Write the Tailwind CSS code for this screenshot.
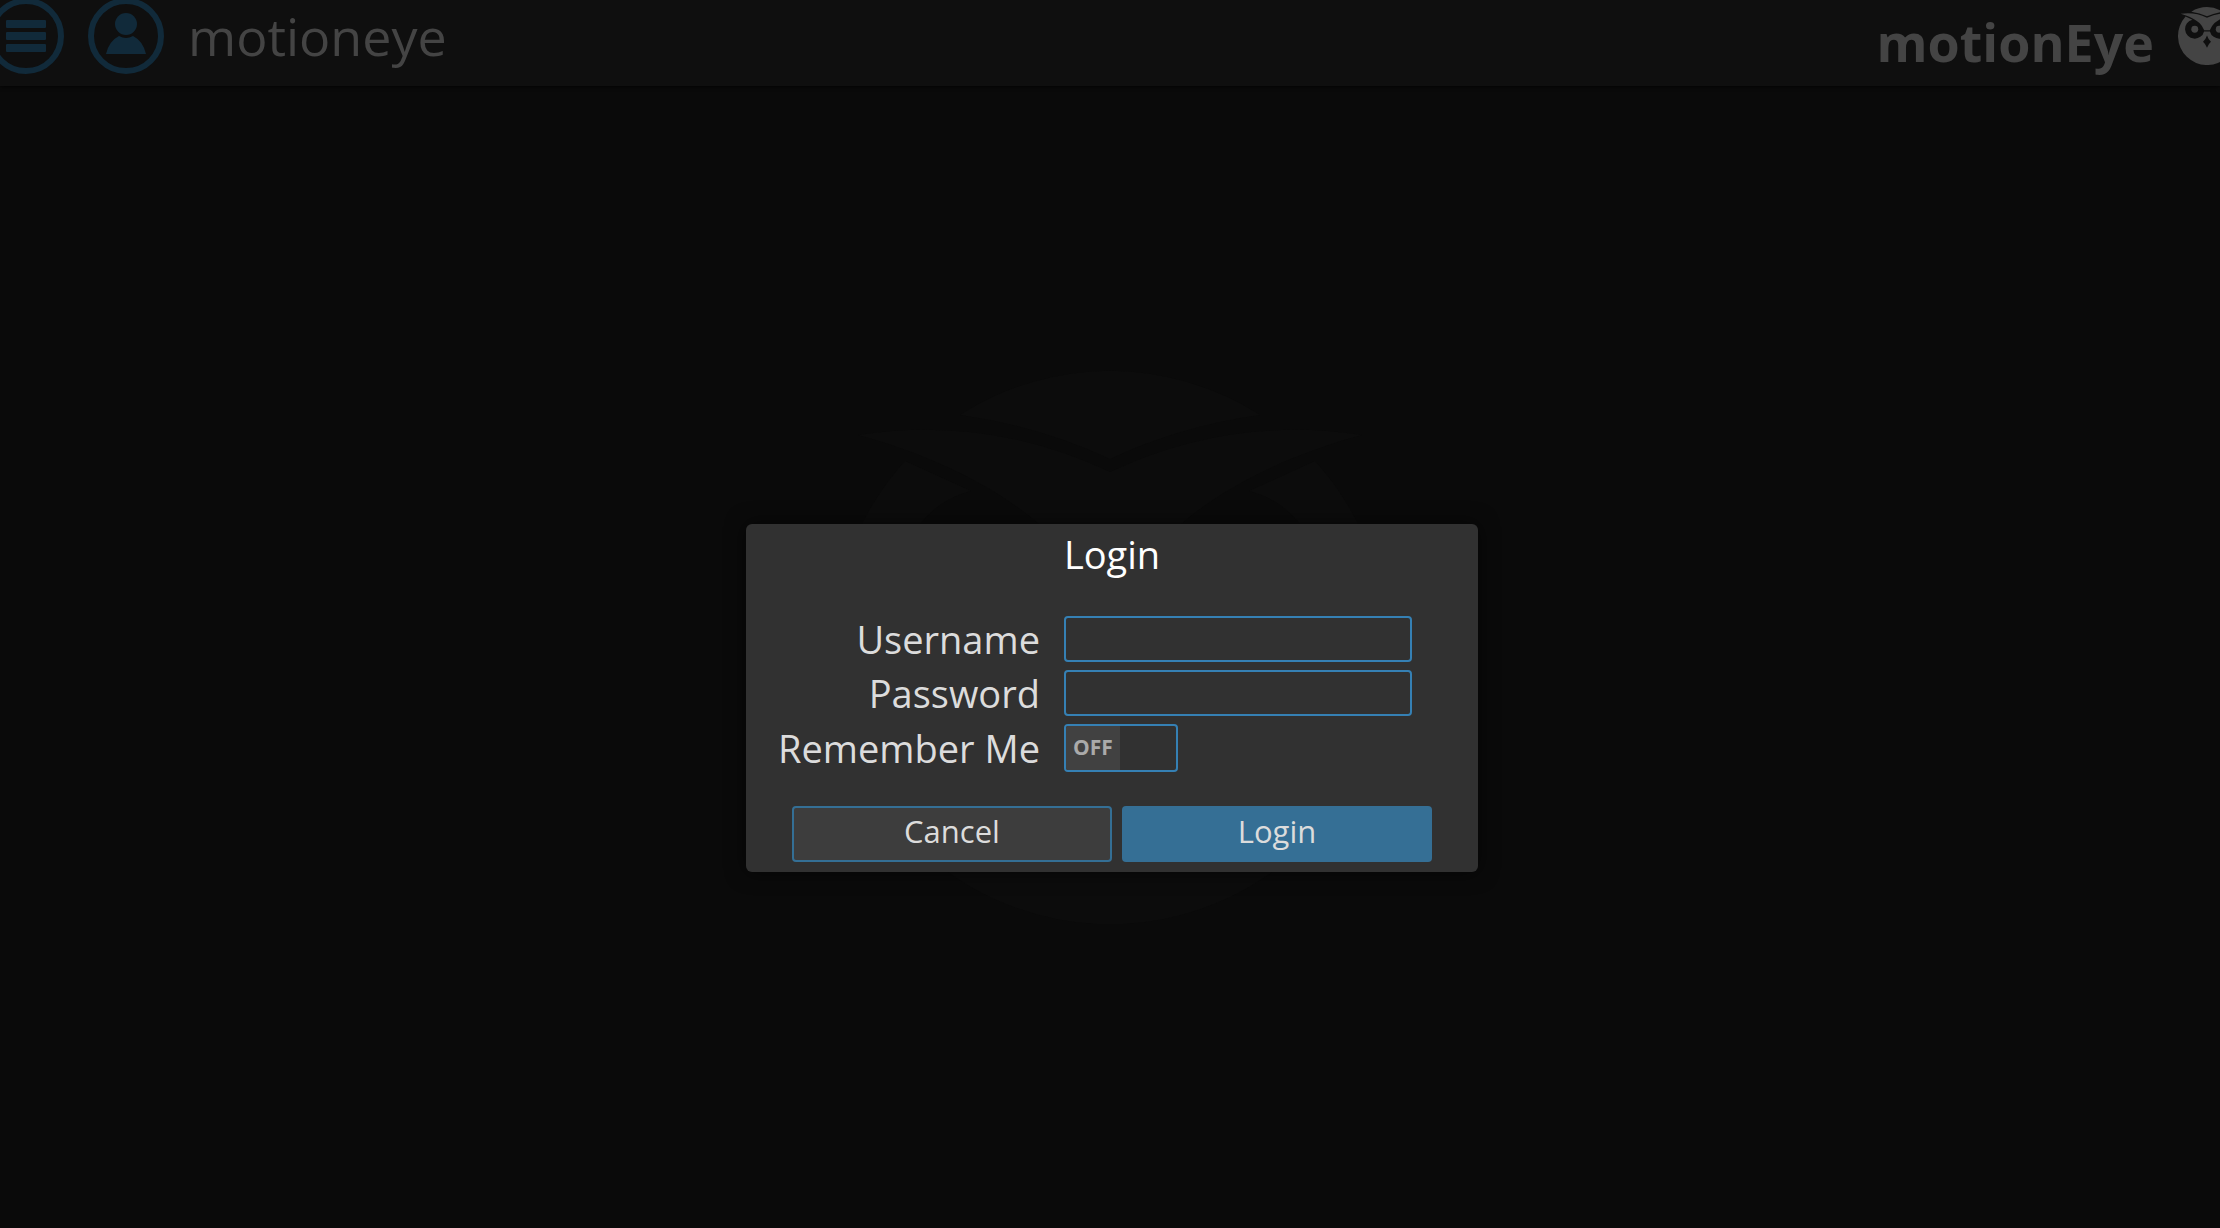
<!DOCTYPE html>
<html lang="en">
<head>
  <meta charset="UTF-8">
  <title>motionEye</title>
  <script src="https://cdn.jsdelivr.net/npm/@tailwindcss/browser@4"></script>
</head>
<body class="flex min-h-screen flex-col overflow-hidden bg-[#0a0a0a] font-['Open_Sans',sans-serif] text-[#dcdcdc]">

  <!-- owl shared by the header logo and the page background -->
  <svg class="hidden" aria-hidden="true">
    <symbol id="owl" viewBox="-277 -277 554 554">
      <path d="M-150-232A277 277 0 0 1 150-232Q70-221 0-188Q-70-221-150-232Z"/>
      <path d="M-252-212Q-120-232 0-175Q120-232 252-212C170-190 110-156 72-124Q40-92 27-56H-27Q-40-92-72-124C-110-156-170-190-252-212Z"/>
      <path fill-rule="evenodd" d="M-205-186L-139-156A92 92 0 1 0-28-44H28A92 92 0 1 0 139-156L205-186A277 277 0 1 1-205-186ZM0-5Q-12 32-38 55Q-12 78 0 112Q12 78 38 55Q12 32 0-5Z"/>
      <circle cx="-117" cy="-65" r="33"/>
      <circle cx="117" cy="-65" r="33"/>
    </symbol>
  </svg>

  <header class="z-10 flex h-[86px] items-start justify-between overflow-hidden bg-[#0f0f0f] text-[#444] shadow-[0_0_4px_#000]">
    <div class="-ml-3 -mt-0.5 flex items-center gap-6">
      <button aria-label="Settings" class="text-[#112a3a]">
        <svg class="size-[76px]" viewBox="0 0 76 76" fill="currentColor">
          <circle cx="38" cy="38" r="35" fill="none" stroke="currentColor" stroke-width="6"/>
          <rect x="18" y="22" width="40" height="8" rx="1"/>
          <rect x="18" y="34" width="40" height="8" rx="1"/>
          <rect x="18" y="46" width="40" height="8" rx="1"/>
        </svg>
      </button>
      <button aria-label="Switch user" class="text-[#112a3a]">
        <svg class="size-[76px]" viewBox="0 0 76 76" fill="currentColor">
          <circle cx="38" cy="38" r="35" fill="none" stroke="currentColor" stroke-width="6"/>
          <circle cx="38" cy="26" r="11"/>
          <path d="M18 56Q21 43 31 38Q38 42 45 38Q55 43 58 56Z"/>
        </svg>
      </button>
      <span class="text-[52px] leading-[72px]">motioneye</span>
    </div>
    <a href="#" class="-mr-4 flex items-start gap-6">
      <span class="mt-1.5 text-[52px] leading-[72px] font-bold">motionEye</span>
      <svg class="mt-[7px] size-[58px]" fill="currentColor"><use href="#owl"/></svg>
    </a>
  </header>

  <main class="grid flex-1 place-items-center pb-5">
    <svg class="col-start-1 row-start-1 size-[554px] text-[#0c0c0c]" fill="currentColor"><use href="#owl"/></svg>

    <form class="z-10 col-start-1 row-start-1 mt-[102px] ml-1 w-[732px] rounded-md bg-[#313131] pb-2.5 shadow-[0_0_20px_#00000099]">
      <h1 class="pt-0.5 pb-0.5 text-center text-[38px] leading-[56px] text-white">Login</h1>

      <div class="mt-8 grid grid-cols-[294px_348px] items-center gap-x-6 gap-y-2 text-[38px] leading-[46px]">
        <label for="username" class="text-right">Username</label>
        <input id="username" type="text" class="h-[46px] rounded border-2 border-[#3580b4] px-2 text-3xl outline-none">
        <label for="password" class="text-right">Password</label>
        <input id="password" type="password" class="h-[46px] rounded border-2 border-[#3580b4] px-2 text-3xl outline-none">
        <label for="remember" class="text-right">Remember Me</label>
        <label class="flex h-12 w-[114px] overflow-hidden rounded border-2 border-[#3580b4]">
          <input id="remember" type="checkbox" class="peer sr-only">
          <span class="w-[54px] bg-[#414141] text-center text-[21px] leading-[42px] font-bold text-[#aaa] peer-checked:ml-auto">OFF</span>
        </label>
      </div>

      <div class="mx-[46px] mt-[34px] flex gap-2.5 text-[31px] leading-[36px]">
        <button type="button" class="h-14 w-80 rounded border-2 border-[#346f95] bg-[#3d3d3d] pb-1.5">Cancel</button>
        <button type="submit" class="h-14 flex-1 rounded bg-[#356f95] pb-1.5">Login</button>
      </div>
    </form>
  </main>

</body>
</html>
